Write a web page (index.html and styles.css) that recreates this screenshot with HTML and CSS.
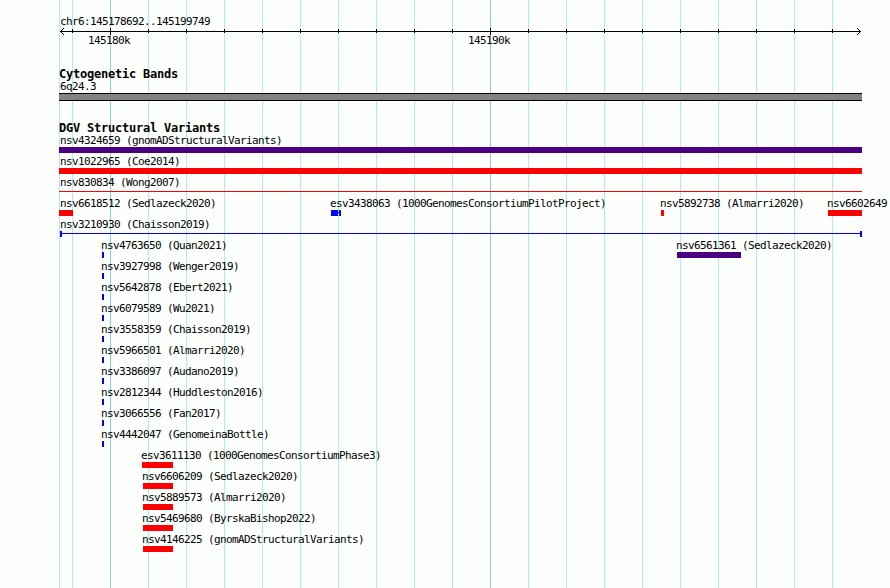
FILE: index.html
```html
<!DOCTYPE html>
<html lang="en">
<head>
  <meta charset="UTF-8" />
  <title>chr6:145178692..145199749</title>
  <link rel="stylesheet" href="styles.css">
</head>
<body>
  <div class="browser">
    <div class="ruler">
      <div class="region">chr6:145178692..145199749</div>
      <svg class="axis" width="803" height="9" viewBox="0 0 803 9" shape-rendering="crispEdges">
        <path d="M1 4h801v1H1z" />
        <path d="M2 3h1v1h-1zM3 2h1v1h-1zM4 1h1v1h-1zM2 5h1v1h-1zM3 6h1v1h-1zM4 7h1v1h-1z" />
        <path d="M800 3h1v1h-1zM799 2h1v1h-1zM798 1h1v1h-1zM800 5h1v1h-1zM799 6h1v1h-1zM798 7h1v1h-1z" />
        <path d="M13 2h1v4h-1zM89 2h1v4h-1zM127 2h1v4h-1zM165 2h1v4h-1zM203 2h1v4h-1zM241 2h1v4h-1zM279 2h1v4h-1zM317 2h1v4h-1zM355 2h1v4h-1zM393 2h1v4h-1z" />
        <path d="M469 2h1v4h-1zM507 2h1v4h-1zM545 2h1v4h-1zM583 2h1v4h-1zM621 2h1v4h-1zM659 2h1v4h-1zM697 2h1v4h-1zM735 2h1v4h-1zM773 2h1v4h-1z" />
        <path d="M51 1h1v7h-1zM431 1h1v7h-1z" />
      </svg>
      <div class="row ticks">
        <span style="grid-column-start: 30">145180k</span>
        <span style="grid-column-start: 410">145190k</span>
      </div>
    </div>

    <div class="track bands">
      <h2>Cytogenetic Bands</h2>
      <div class="label">6q24.3</div>
      <div class="band"></div>
    </div>

    <div class="track variants">
      <h2>DGV Structural Variants</h2>
      <div class="row">
        <div class="feature edge" style="grid-column-start: 1"><span class="label">nsv4324659 (gnomADStructuralVariants)</span><div class="bar complex" style="width: 803px"></div></div>
      </div>
      <div class="row">
        <div class="feature edge" style="grid-column-start: 1"><span class="label">nsv1022965 (Coe2014)</span><div class="bar loss" style="width: 803px"></div></div>
      </div>
      <div class="row">
        <div class="feature edge" style="grid-column-start: 1"><span class="label">nsv830834 (Wong2007)</span><div class="bar line" style="width: 803px"></div></div>
      </div>
      <div class="row">
        <div class="feature edge" style="grid-column-start: 1"><span class="label">nsv6618512 (Sedlazeck2020)</span><div class="bar loss" style="width: 14px"></div></div>
        <div class="feature" style="grid-column-start: 273"><span class="label">esv3438063 (1000GenomesConsortiumPilotProject)</span><div class="bar joined"><i></i><b></b><i></i></div></div>
        <div class="feature" style="grid-column-start: 603"><span class="label">nsv5892738 (Almarri2020)</span><div class="bar loss" style="width: 3px"></div></div>
        <div class="feature" style="grid-column-start: 770"><span class="label">nsv6602649</span><div class="bar loss" style="width: 34px"></div></div>
      </div>
      <div class="row">
        <div class="feature edge" style="grid-column-start: 1"><span class="label">nsv3210930 (Chaisson2019)</span><div class="bar span"></div></div>
      </div>
      <div class="row">
        <div class="feature" style="grid-column-start: 44"><span class="label">nsv4763650 (Quan2021)</span><div class="bar gain" style="width: 2px"></div></div>
        <div class="feature" style="grid-column-start: 619"><span class="label">nsv6561361 (Sedlazeck2020)</span><div class="bar complex" style="width: 64px"></div></div>
      </div>
      <div class="row">
        <div class="feature" style="grid-column-start: 44"><span class="label">nsv3927998 (Wenger2019)</span><div class="bar gain" style="width: 2px"></div></div>
      </div>
      <div class="row">
        <div class="feature" style="grid-column-start: 44"><span class="label">nsv5642878 (Ebert2021)</span><div class="bar gain" style="width: 2px"></div></div>
      </div>
      <div class="row">
        <div class="feature" style="grid-column-start: 44"><span class="label">nsv6079589 (Wu2021)</span><div class="bar gain" style="width: 2px"></div></div>
      </div>
      <div class="row">
        <div class="feature" style="grid-column-start: 44"><span class="label">nsv3558359 (Chaisson2019)</span><div class="bar gain" style="width: 2px"></div></div>
      </div>
      <div class="row">
        <div class="feature" style="grid-column-start: 44"><span class="label">nsv5966501 (Almarri2020)</span><div class="bar gain" style="width: 2px"></div></div>
      </div>
      <div class="row">
        <div class="feature" style="grid-column-start: 44"><span class="label">nsv3386097 (Audano2019)</span><div class="bar gain" style="width: 2px"></div></div>
      </div>
      <div class="row">
        <div class="feature" style="grid-column-start: 44"><span class="label">nsv2812344 (Huddleston2016)</span><div class="bar gain" style="width: 2px"></div></div>
      </div>
      <div class="row">
        <div class="feature" style="grid-column-start: 44"><span class="label">nsv3066556 (Fan2017)</span><div class="bar gain" style="width: 2px"></div></div>
      </div>
      <div class="row">
        <div class="feature" style="grid-column-start: 44"><span class="label">nsv4442047 (GenomeinaBottle)</span><div class="bar gain" style="width: 2px"></div></div>
      </div>
      <div class="row">
        <div class="feature" style="grid-column-start: 84"><span class="label">esv3611130 (1000GenomesConsortiumPhase3)</span><div class="bar loss" style="width: 31px"></div></div>
      </div>
      <div class="row">
        <div class="feature" style="grid-column-start: 85"><span class="label">nsv6606209 (Sedlazeck2020)</span><div class="bar loss" style="width: 30px"></div></div>
      </div>
      <div class="row">
        <div class="feature" style="grid-column-start: 85"><span class="label">nsv5889573 (Almarri2020)</span><div class="bar loss" style="width: 30px"></div></div>
      </div>
      <div class="row">
        <div class="feature" style="grid-column-start: 85"><span class="label">nsv5469680 (ByrskaBishop2022)</span><div class="bar loss" style="width: 30px"></div></div>
      </div>
      <div class="row">
        <div class="feature" style="grid-column-start: 85"><span class="label">nsv4146225 (gnomADStructuralVariants)</span><div class="bar loss" style="width: 30px"></div></div>
      </div>
    </div>
  </div>
</body>
</html>
```

FILE: styles.css
```css
* {
  box-sizing: border-box;
}
body {
  margin: 0;
  background: #fdfffc;
  color: #000;
  font-family: "DejaVu Sans Mono", monospace;
  font-size: 11px;
  letter-spacing: -0.622px;
  line-height: 14px;
}
/* vertical guides: one per 1kb, darker every 10kb */
.browser {
  height: 588px;
  padding: 14px 28px 0 59px;
  overflow: hidden;
  background-image:
    linear-gradient(#afeeee, #afeeee),
    linear-gradient(#87ceeb, #87ceeb),
    linear-gradient(#87ceeb, #87ceeb),
    repeating-linear-gradient(90deg, #afeeee 0 1px, transparent 1px 38px);
  background-size: 1px 100%, 1px 100%, 1px 100%, 761px 100%;
  background-position: 59px 0, 110px 0, 490px 0, 72px 0;
  background-repeat: no-repeat;
}
.ruler {
  height: 53px;
}
.region {
  height: 13px;
  padding-left: 1px;
  line-height: 16px;
}
.axis {
  display: block;
}
.row {
  display: grid;
  grid-template-columns: repeat(803, 1px);
  height: 21px;
}
.row > * {
  grid-row: 1;
  white-space: nowrap;
}
.ticks {
  margin-top: -2px;
}
.track h2 {
  margin: 0;
  height: 12px;
  font-size: 12px;
  font-weight: bold;
  letter-spacing: -0.224px;
  line-height: 14px;
  white-space: nowrap;
}
.bands {
  height: 54px;
}
.label {
  display: block;
  height: 14px;
  line-height: 16px;
}
.bands .label {
  padding-left: 1px;
}
.band {
  width: 803px;
  height: 8px;
  background: #848284;
  border-top: 1px solid #000;
  border-bottom: 1px solid #000;
}
.feature .label {
  margin-left: -1px;
}
.feature.edge .label {
  margin-left: 1px;
}
.bar {
  height: 6px;
}
.loss {
  background: #f00;
}
.gain {
  background: #00f;
}
.complex {
  background: #4b0082;
}
.bar.line {
  height: 1px;
  margin-top: 2px;
  background: #f00;
}
.span {
  width: 802px;
  margin-left: 1px;
  border: solid #00f;
  border-width: 0 2px;
  background: linear-gradient(#00f, #00f) 0 2px / 100% 1px no-repeat;
}
.joined {
  display: flex;
  align-items: flex-start;
  width: 10px;
}
.joined i {
  width: 7px;
  height: 6px;
  background: #00f;
}
.joined b {
  width: 1px;
  height: 1px;
  margin-top: 2px;
  background: #00f;
}
.joined i:last-child {
  width: 2px;
}
```
